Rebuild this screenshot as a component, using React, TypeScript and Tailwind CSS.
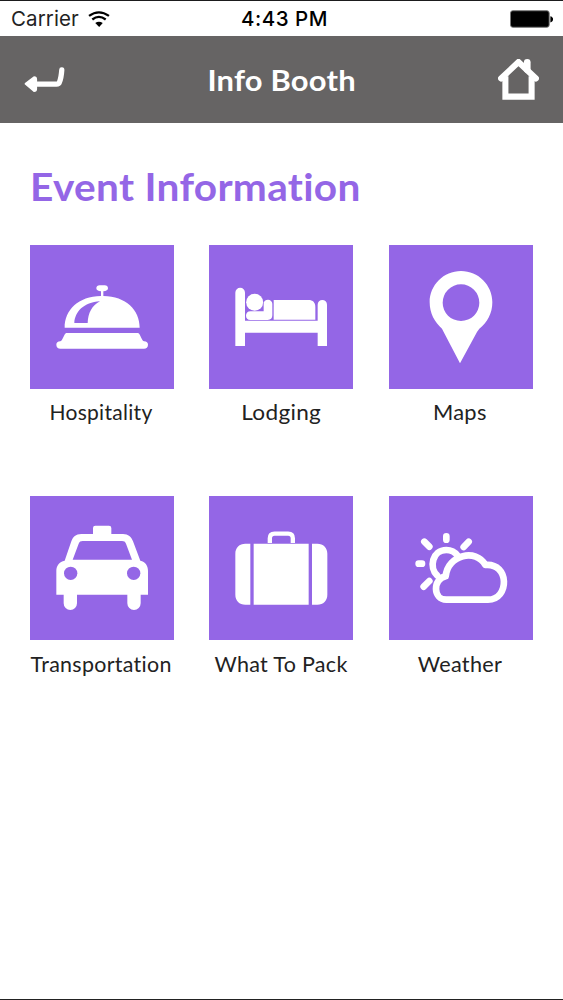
import type { ReactNode } from "react";

type Tile = { label: string; text: string; viewBox: string; art: ReactNode };

const PURPLE = "#9466e6";

const tiles: Tile[] = [
  {
    label: "Hospitality",
    text: "mt-[9px] pr-[2px] tracking-[0.3px]",
    viewBox: "15 15 432 432",
    art: (
      <>
        <path d="M119 263C119 210 160 169 228 168v-14c-9-1-14-4-14-9 0-6 4-9 10-9h15c6 0 10 3 10 9 0 5-5 8-14 9v14c68 1 109 42 109 95Z" />
        <path fill={PURPLE} d="M148 249c2-33 27-62 77-65-24 12-36 36-37 65Z" />
        <path d="M124 279h215c8 3 9 21 18 25 8 0 12 4 12 10 0 8-5 12-12 12H106c-7 0-12-4-12-12 0-6 4-10 12-10 9-4 10-22 18-25Z" />
      </>
    ),
  },
  {
    label: "Lodging",
    text: "mt-[9px] tracking-[0.3px] scale-x-[1.075]",
    viewBox: "13 15 432 432",
    art: (
      <>
        <path d="M92 318V158a14 14 0 0 1 29 0v84h218v-48a14 14 0 0 1 28 0v124h-28v-40H121v40Z" />
        <circle cx="150" cy="187" r="25.500" />
        <path d="M137 214h40v-23c0-8 6-12 13-12s13 5 13 12v35c0 9-5 14-14 14h-52c-8 0-13-6-13-13s5-13 13-13Z" />
        <path d="M207 180h104c14 0 21 8 21 21v38H207Z" />
      </>
    ),
  },
  {
    label: "Maps",
    text: "mt-[9px] pr-[2px] tracking-[0.3px] scale-x-[1.04]",
    viewBox: "15 15 432 432",
    art: (
      <path
        fillRule="evenodd"
        d="M231 93c52 0 94 42 94 94 0 33-15 61-39 79l-7 10-51 94-49-94-5-10c-22-19-37-46-37-79 0-52 42-94 94-94Zm0 40a55 55 0 1 0 0 110 55 55 0 0 0 0-110Z"
      />
    ),
  },
  {
    label: "Transportation",
    text: "mt-[10px] pr-[2px] tracking-[0.3px] scale-x-[1.02]",
    viewBox: "15 19 432 432",
    art: (
      <>
        <path
          fillRule="evenodd"
          d="M204 133v-18q0-7 7-7h41q7 0 7 7v18h35c16 0 25 9 30 22l22 58c15 3 23 15 23 30v72h-22v26a20 20 0 0 1-40 0v-26H156v26a20 20 0 0 1-40 0v-26H94v-72c0-15 9-27 25-30l20-58c5-13 13-22 30-22Zm-31 21c-6 0-10 2-12 8l-18 48h178l-18-48c-2-6-6-8-12-8Z"
        />
        <circle cx="137" cy="251" r="20" fill={PURPLE} />
        <circle cx="326" cy="251" r="20" fill={PURPLE} />
      </>
    ),
  },
  {
    label: "What To Pack",
    text: "mt-[10px] pl-px tracking-[0.3px] scale-x-[1.025]",
    viewBox: "13 19 432 432",
    art: (
      <>
        <path d="M137 162v183h-15c-18 0-30-12-30-30V192c0-18 12-30 30-30ZM147 162h165v183H147ZM322 162h16c18 0 30 12 30 30v123c0 18-12 30-30 30h-16Z" />
        <path fill="none" stroke="white" strokeWidth="13" d="M195.500 160v-14c0-9 5-14 14-14h41c9 0 14 5 14 14v14" />
      </>
    ),
  },
  {
    label: "Weather",
    text: "mt-[10px] pr-[2px] tracking-[0.3px] scale-x-[1.03]",
    viewBox: "15 19 432 432",
    art: (
      <g fill="none" stroke="white" strokeWidth="20" strokeLinecap="round" strokeLinejoin="round">
        <path d="M160 258C134 233 145 181 187 181c14 0 25 5 34 17" />
        <path d="M187 330c-40 0-42-62-2-70 6-66 92-84 119-34 73-7 73 104 8 104Z" />
        <path d="M187 140v10M121 156l15 15M254 156l-15 16M104 222h10M136 274l-17 17" />
      </g>
    ),
  },
];

function StatusBar() {
  return (
    <div className="grid h-[36px] grid-cols-3 items-center border-t border-[#1b1b1d] bg-white pl-[11px] pr-[10px] pt-[2px] font-['Inter',sans-serif] text-[21px] leading-none text-black">
      <div className="flex items-center gap-[9px]">
        <span className="text-[20.5px] tracking-[0.1px] text-[#222]">Carrier</span>
        <svg viewBox="264 28 65 49" className="mt-[-2px] h-[16px] w-[22px]">
          <g fill="none" stroke="black" strokeWidth="7">
            <path d="M266 43Q296 21 327 43M276 54Q296 38 317 54" />
          </g>
          <path d="M285 65q11-8 23 0l-11 12Z" />
        </svg>
      </div>
      <span className="pl-[5px] text-center text-[20.5px] font-medium tracking-[0.5px]">4:43 PM</span>
      <svg viewBox="141 29 130 53" className="mt-[-2px] h-[18px] w-[43px] justify-self-end">
        <rect x="142.500" y="30.500" width="117" height="50" rx="7" fill="black" stroke="#777" strokeWidth="3" />
        <path d="M263 47c11 2 11 17 0 19Z" />
      </svg>
    </div>
  );
}

function Header() {
  return (
    <header className="flex h-[87px] items-center justify-between bg-[#666464] pl-[24px] pr-[23.5px]">
      <svg viewBox="71 200 123 76" className="mt-[-1px] h-[25px] w-[41px]">
        <path fill="none" stroke="white" strokeWidth="16" strokeLinecap="round" strokeLinejoin="round" d="M185 209c-1 15-3 27-7 37q-2 6-9 6h-66" />
        <path fill="white" stroke="white" strokeWidth="6" strokeLinejoin="round" d="M75 251l26-20q6 0 6 6v30q0 6-6 6Z" />
      </svg>
      <h1 className="scale-x-[1.065] font-['Lato',sans-serif] text-[29px] font-bold leading-none tracking-[0.2px] text-white">Info Booth</h1>
      <svg viewBox="107 179 122 122" className="h-[41px] w-[41px]">
        <path fill="none" stroke="white" strokeWidth="18" strokeLinecap="round" d="M116 237l52-49 52 49" />
        <path fill="none" stroke="white" strokeWidth="20" strokeLinecap="round" d="M194 189v21" />
        <path fill="none" stroke="white" strokeWidth="18" d="M129 230v61h78v-61" />
      </svg>
    </header>
  );
}

export default function App() {
  return (
    <div className="flex h-[1000px] w-full flex-col overflow-hidden border-b border-[#222] bg-white">
      <StatusBar />
      <Header />
      <main className="px-[30px] pt-[40px] font-['Lato',sans-serif]">
        <h2 className="h-[82px] origin-left scale-x-[1.068] whitespace-nowrap text-[38px] font-bold leading-[47px] tracking-[0.3px] text-[#9466e6]">Event Information</h2>
        <div className="grid grid-cols-[179px_180px_144px] gap-y-[59px]">
          {tiles.map((tile) => (
            <div key={tile.label} className="flex h-[192px] w-[144px] flex-col items-center">
              <svg viewBox={tile.viewBox} fill="white" className="h-[144px] w-[144px] shrink-0 bg-[#9466e6]">
                {tile.art}
              </svg>
              <span className={`whitespace-nowrap text-[21px] leading-[28px] text-[#222] ${tile.text}`}>{tile.label}</span>
            </div>
          ))}
        </div>
      </main>
    </div>
  );
}
